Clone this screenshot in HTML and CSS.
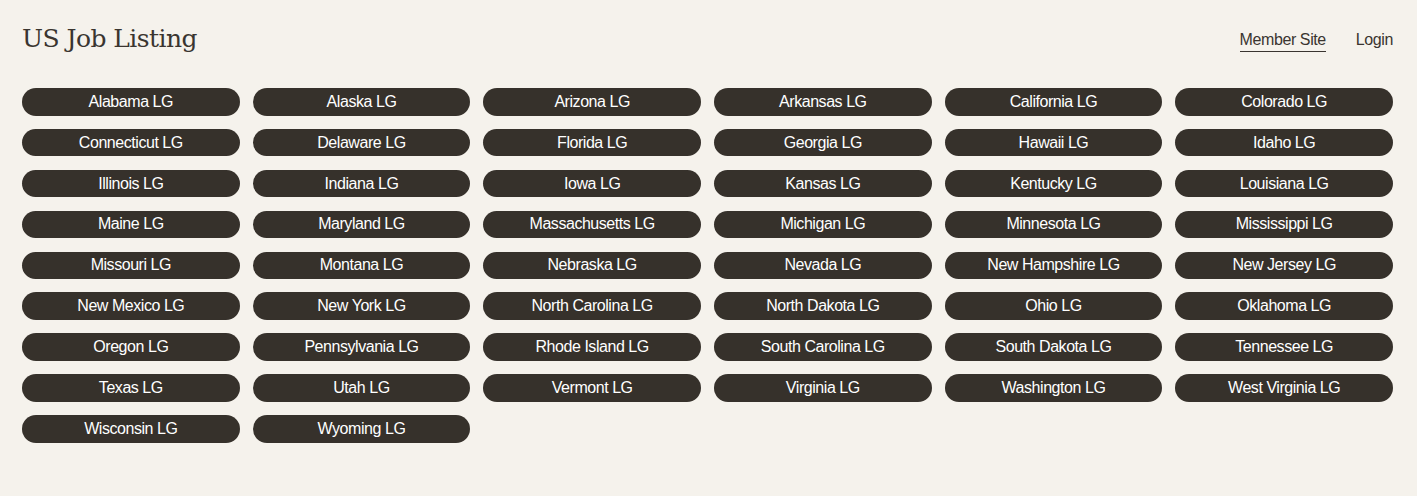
FILE: index.html
```html
<!DOCTYPE html>
<html lang="en">
<head>
    <meta charset="UTF-8">
    <meta name="viewport" content="width=device-width, initial-scale=1.0">
    <title>US Job Listing</title>
    <link rel="stylesheet" href="styles.css">
</head>
<body>
    <!-- header -->
    <div class="header">
        <div class="site-title">US Job Listing</div>
        <div class="nav">
            <a class="nav-link active" href="#">Member Site</a>
            <a class="nav-link" href="#">Login</a>
        </div>
    </div>

    <!-- state list -->
    <div class="states">
        <a class="state-btn" href="#">Alabama LG</a>
        <a class="state-btn" href="#">Alaska LG</a>
        <a class="state-btn" href="#">Arizona LG</a>
        <a class="state-btn" href="#">Arkansas LG</a>
        <a class="state-btn" href="#">California LG</a>
        <a class="state-btn" href="#">Colorado LG</a>
        <a class="state-btn" href="#">Connecticut LG</a>
        <a class="state-btn" href="#">Delaware LG</a>
        <a class="state-btn" href="#">Florida LG</a>
        <a class="state-btn" href="#">Georgia LG</a>
        <a class="state-btn" href="#">Hawaii LG</a>
        <a class="state-btn" href="#">Idaho LG</a>
        <a class="state-btn" href="#">Illinois LG</a>
        <a class="state-btn" href="#">Indiana LG</a>
        <a class="state-btn" href="#">Iowa LG</a>
        <a class="state-btn" href="#">Kansas LG</a>
        <a class="state-btn" href="#">Kentucky LG</a>
        <a class="state-btn" href="#">Louisiana LG</a>
        <a class="state-btn" href="#">Maine LG</a>
        <a class="state-btn" href="#">Maryland LG</a>
        <a class="state-btn" href="#">Massachusetts LG</a>
        <a class="state-btn" href="#">Michigan LG</a>
        <a class="state-btn" href="#">Minnesota LG</a>
        <a class="state-btn" href="#">Mississippi LG</a>
        <a class="state-btn" href="#">Missouri LG</a>
        <a class="state-btn" href="#">Montana LG</a>
        <a class="state-btn" href="#">Nebraska LG</a>
        <a class="state-btn" href="#">Nevada LG</a>
        <a class="state-btn" href="#">New Hampshire LG</a>
        <a class="state-btn" href="#">New Jersey LG</a>
        <a class="state-btn" href="#">New Mexico LG</a>
        <a class="state-btn" href="#">New York LG</a>
        <a class="state-btn" href="#">North Carolina LG</a>
        <a class="state-btn" href="#">North Dakota LG</a>
        <a class="state-btn" href="#">Ohio LG</a>
        <a class="state-btn" href="#">Oklahoma LG</a>
        <a class="state-btn" href="#">Oregon LG</a>
        <a class="state-btn" href="#">Pennsylvania LG</a>
        <a class="state-btn" href="#">Rhode Island LG</a>
        <a class="state-btn" href="#">South Carolina LG</a>
        <a class="state-btn" href="#">South Dakota LG</a>
        <a class="state-btn" href="#">Tennessee LG</a>
        <a class="state-btn" href="#">Texas LG</a>
        <a class="state-btn" href="#">Utah LG</a>
        <a class="state-btn" href="#">Vermont LG</a>
        <a class="state-btn" href="#">Virginia LG</a>
        <a class="state-btn" href="#">Washington LG</a>
        <a class="state-btn" href="#">West Virginia LG</a>
        <a class="state-btn" href="#">Wisconsin LG</a>
        <a class="state-btn" href="#">Wyoming LG</a>
    </div>
</body>
</html>
```

FILE: styles.css
```css
* {
    margin: 0;
    padding: 0;
    box-sizing: border-box;
}

body {
    font-family: 'Liberation Sans', Arial, sans-serif;
    background: #f5f2ec;
    color: #3a3530;
    min-height: 100vh;
}

.header {
    display: flex;
    justify-content: space-between;
    align-items: flex-start;
    padding: 22px 24px 0 22px;
    height: 78px;
}

.site-title {
    font-family: 'DejaVu Serif', 'Liberation Serif', serif;
    font-size: 25px;
    letter-spacing: -0.55px;
    color: #3a3530;
    line-height: 34px;
}

.nav {
    display: flex;
    gap: 30px;
    padding-top: 8px;
}

.nav-link {
    font-size: 16px;
    letter-spacing: -0.4px;
    color: #3a3530;
    text-decoration: none;
    line-height: 20px;
}

.nav-link.active {
    border-bottom: 1px solid #3a3530;
    padding-bottom: 1px;
}

.states {
    display: grid;
    grid-template-columns: repeat(6, 1fr);
    column-gap: 13px;
    row-gap: 13.375px;
    padding: 10px 24px 40px 22px;
}

.state-btn {
    display: flex;
    align-items: center;
    justify-content: center;
    height: 27.5px;
    background: #36312b;
    color: #ffffff;
    border-radius: 14px;
    font-size: 16px;
    letter-spacing: -0.45px;
    text-decoration: none;
}
```
